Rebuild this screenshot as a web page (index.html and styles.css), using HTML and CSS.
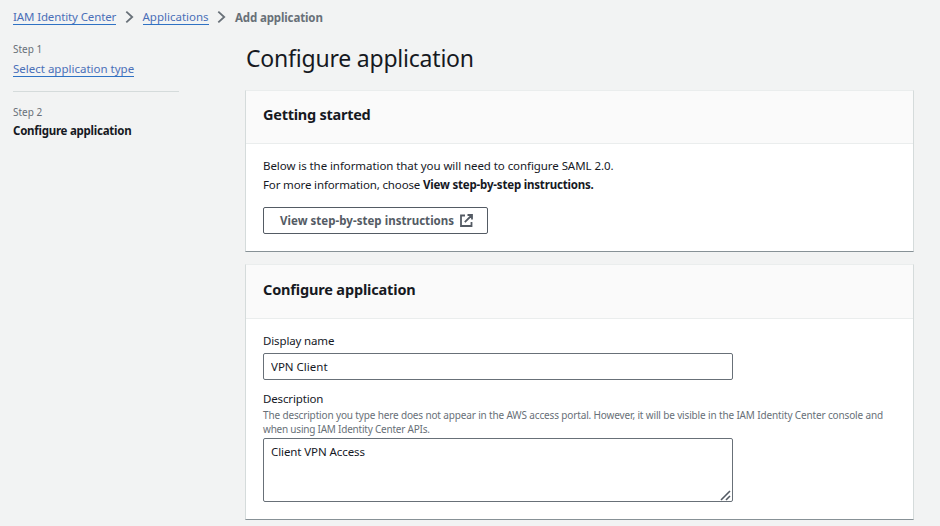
FILE: index.html
```html
<!DOCTYPE html>
<html lang="en">
<head>
<meta charset="utf-8">
<title>Configure application</title>
<link rel="stylesheet" href="styles.css">
</head>
<body>
<nav class="breadcrumbs">
  <a class="link crumb-iam" href="#">IAM Identity Center</a>
  <svg class="chevron" viewBox="0 0 9 14"><path d="M1.3 1.6 7.2 7 1.3 12.4"/></svg>
  <a class="link crumb-apps" href="#">Applications</a>
  <svg class="chevron" viewBox="0 0 9 14"><path d="M1.3 1.6 7.2 7 1.3 12.4"/></svg>
  <span class="current">Add application</span>
</nav>
<div class="layout">
  <aside class="steps">
    <div class="step">
      <div class="step-number">Step 1</div>
      <a class="link step-link" href="#">Select application type</a>
    </div>
    <div class="step">
      <div class="step-number">Step 2</div>
      <span class="step-active">Configure application</span>
    </div>
  </aside>
  <main>
    <h1>Configure application</h1>
    <section class="card">
      <header class="card-header"><h2 class="h-start">Getting started</h2></header>
      <div class="card-body">
        <p class="intro-one">Below is the information that you will need to configure SAML 2.0.</p>
        <p class="intro-two"><span>For more information, choose </span><b>View step-by-step instructions.</b></p>
        <button class="button"><span>View step-by-step instructions</span>
          <svg class="external" viewBox="0 0 13 13"><path d="M5 1.5H1V12H11.5V8M7.5 1H12V5.5M12 1 4.8 8.2"/></svg>
        </button>
      </div>
    </section>
    <section class="card card-form">
      <header class="card-header tall"><h2>Configure application</h2></header>
      <div class="card-body form">
        <label for="name">Display name</label>
        <input id="name" class="control name" value="VPN Client">
        <label for="desc">Description</label>
        <div class="hint"><span class="hint-one">The description you type here does not appear in the AWS access portal. However, it will be visible in the IAM Identity Center console and</span><br><span class="hint-two">when using IAM Identity Center APIs.</span></div>
        <div class="area">
          <textarea id="desc" class="control description">Client VPN Access</textarea>
          <svg class="grip" viewBox="0 0 11 11"><path d="M1 10 10 1M6 10 10 6"/></svg>
        </div>
      </div>
    </section>
  </main>
</div>
</body>
</html>
```
FILE: styles.css
```css
* { box-sizing: border-box; }
body {
  margin: 0;
  height: 526px;
  overflow: hidden;
  background: #f2f3f3;
  color: #16191f;
  font: 11.5px/19px "Noto Sans", sans-serif;
}
h1, h2, p { margin: 0; }
span, a, b { white-space: pre; }
.breadcrumbs {
  display: flex;
  align-items: center;
  height: 34px;
  padding-left: 13px;
}
.link {
  color: #4a6fb8;
  text-decoration: none;
  border-bottom: 1px solid #2f72c4;
  line-height: 15px;
}
.crumb-iam { letter-spacing: -0.13px; }
.chevron { width: 9px; height: 14px; margin: 0 8.7px; }
.chevron path { fill: none; stroke: #687078; stroke-width: 1.8; }
.current { color: #687078; font-weight: 700; letter-spacing: -0.13px; }
.layout { display: flex; }
.steps { width: 166px; margin: 6px 66px 0 13px; }
.step { height: 51px; }
.step + .step { border-top: 1px solid #d5dbdb; padding-top: 11px; }
.step-number { color: #687078; font-size: 10px; line-height: 19px; }
.step-link { display: inline-block; }
.step-active { display: block; font-weight: 700; line-height: 18px; letter-spacing: -0.25px; }
main { width: 669px; }
h1 {
  height: 56px;
  padding-left: 1px;
  font-size: 23px;
  font-weight: 400;
  line-height: 48px;
  letter-spacing: -0.21px;
}
.card {
  height: 162px;
  background: #fff;
  border: 1px solid #d5dbdb;
  border-top-color: #eaeded;
  border-bottom-color: #879196;
}
.card-form { height: 256px; margin-top: 12px; }
.card-header {
  height: 53px;
  padding-left: 17px;
  background: #fafafa;
  border-bottom: 1px solid #eaeded;
}
.card-header.tall { height: 54px; }
h2 { font-size: 14.5px; line-height: 49px; font-weight: 700; letter-spacing: -0.16px; }
.h-start { line-height: 47px; letter-spacing: -0.25px; }
.card-body { padding: 12px 17px; }
.intro-one { letter-spacing: -0.07px; }
.intro-two { letter-spacing: -0.14px; }
.intro-two b { letter-spacing: -0.19px; }
.button {
  display: flex;
  align-items: center;
  justify-content: space-between;
  width: 225px;
  height: 27px;
  margin-top: 13px;
  padding: 0 14px 0 16px;
  color: #545b64;
  background: #fff;
  border: 1px solid #545b64;
  border-radius: 2px;
  font: 700 11.5px/19px "Noto Sans", sans-serif;
  letter-spacing: 0.03px;
}
.external { width: 13px; height: 13px; }
.external path { fill: none; stroke: #545b64; stroke-width: 1.8; }
.form label { display: block; height: 19px; letter-spacing: -0.14px; }
.control {
  display: block;
  width: 470px;
  border: 1px solid #687078;
  border-radius: 2px;
  background: #fff;
  color: #16191f;
  font: 11.5px/19px "Noto Sans", sans-serif;
  padding: 3px 7px;
  resize: none;
  outline: none;
}
.name { height: 27px; margin: 3px 0 9px; }
.hint { font-size: 10px; line-height: 14px; color: #687078; }
.hint-one { letter-spacing: -0.145px; }
.hint-two { letter-spacing: -0.22px; }
.area { position: relative; width: 470px; margin-top: 2px; }
.description { height: 64px; overflow: hidden; letter-spacing: -0.09px; }
.grip { position: absolute; right: 2px; bottom: 1px; width: 11px; height: 11px; }
.grip path { fill: none; stroke: #545b64; stroke-width: 1.6; }
```
